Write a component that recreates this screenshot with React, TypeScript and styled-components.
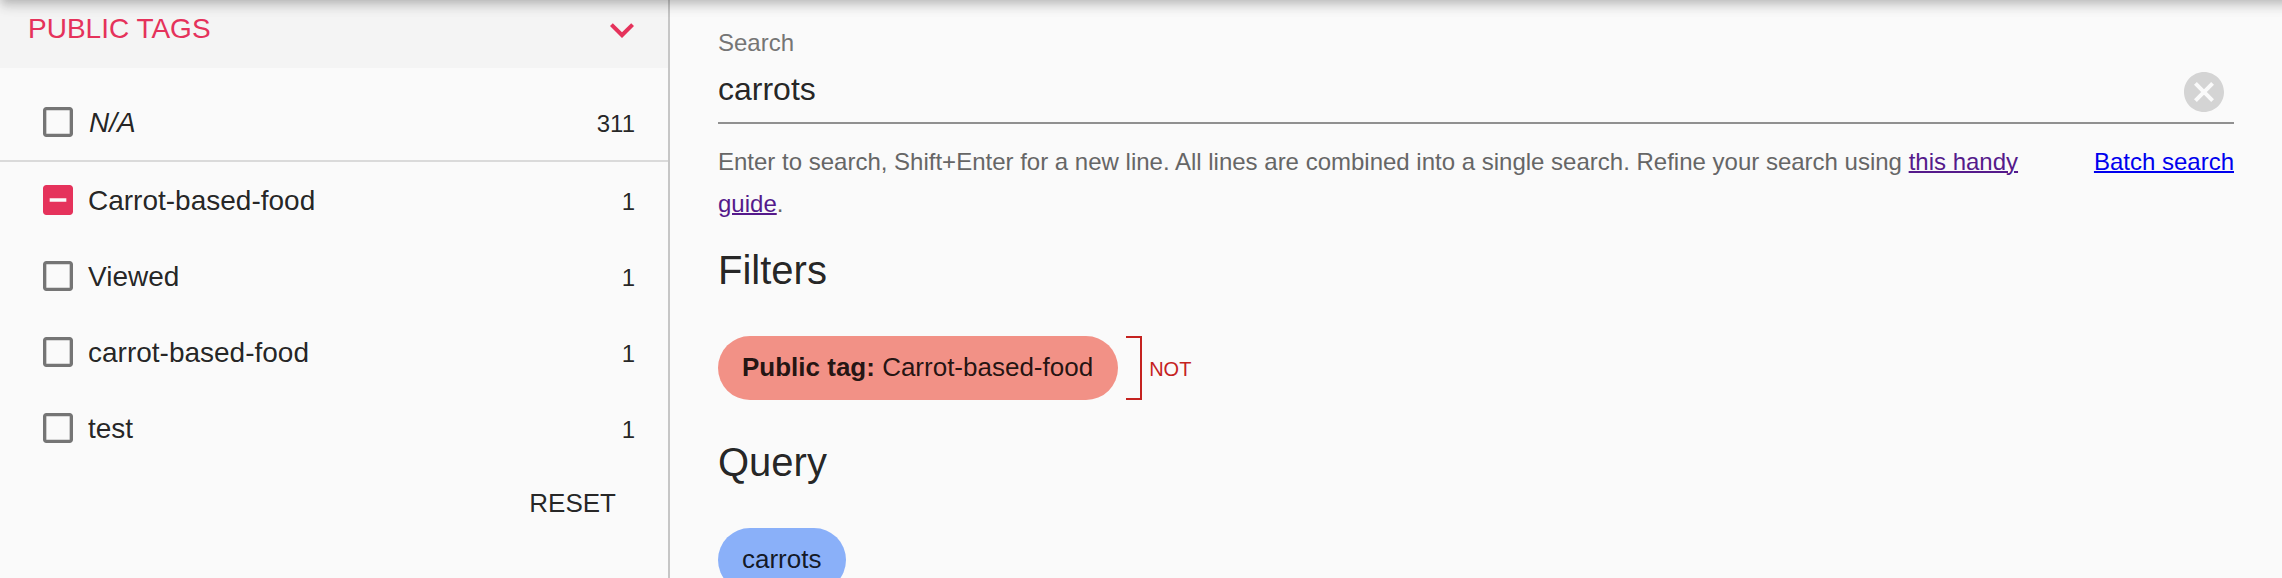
import React from "react";
import styled, { createGlobalStyle } from "styled-components";

const GlobalStyle = createGlobalStyle`
  *, *::before, *::after { box-sizing: border-box; }
  html, body { margin: 0; background: #fafafa; }
  body {
    height: 578px;
    overflow: hidden;
    color: rgba(0, 0, 0, 0.87);
    font-family: "Liberation Sans", Helvetica, Arial, sans-serif;
  }
`;

const Page = styled.div`
  position: relative;
  display: flex;
  height: 578px;
  overflow: hidden;
`;

/* The app bar is scrolled just out of view; only its shadow falls on the page. */
const AppBar = styled.header`
  position: absolute;
  top: -128px;
  left: 0;
  right: -40px;
  height: 128px;
  z-index: 2;
  pointer-events: none;
  box-shadow:
    0 4px 8px -2px rgba(0, 0, 0, 0.15),
    0 8px 10px 0 rgba(0, 0, 0, 0.1),
    0 2px 20px 0 rgba(0, 0, 0, 0.05);
`;

const Sidebar = styled.aside`
  flex: 0 0 670px;
  border-right: 2px solid #c6c6c6;
`;

const FacetHeader = styled.div`
  display: flex;
  align-items: center;
  justify-content: space-between;
  height: 68px;
  padding: 0 22px 8px 28px;
  background: #f4f4f4;
  color: #e5325b;
`;

const FacetTitle = styled.span`
  padding-bottom: 2px;
  font-size: 28px;
  line-height: 40px;
  text-transform: uppercase;
`;

const Icon = styled.svg<{ $size: number }>`
  display: block;
  flex: none;
  width: ${(p) => p.$size}px;
  height: ${(p) => p.$size}px;
  fill: currentColor;
`;

const FacetList = styled.ul`
  margin: 0;
  padding: 16px 0 0;
  list-style: none;
`;

const FacetRow = styled.li<{ $divider?: boolean }>`
  display: flex;
  align-items: center;
  height: ${(p) => (p.$divider ? 78 : 76)}px;
  padding: 0 33px 0 38px;
  border-bottom: ${(p) => (p.$divider ? "2px solid #dadada" : "none")};
`;

const CheckMark = styled.span<{ $active?: boolean }>`
  margin-right: 10px;
  color: ${(p) => (p.$active ? "#e5325b" : "#757575")};
`;

const FacetLabel = styled.span<{ $italic?: boolean }>`
  flex: 1;
  padding-top: 2px;
  padding-left: ${(p) => (p.$italic ? 1 : 0)}px;
  font-size: 28px;
  line-height: 40px;
  font-style: ${(p) => (p.$italic ? "italic" : "normal")};
`;

const FacetCount = styled.span`
  margin-top: 4px;
  font-size: 24px;
  line-height: 32px;
`;

const FacetActions = styled.div`
  display: flex;
  justify-content: flex-end;
  padding: 16px 52px 0 0;
`;

const ResetButton = styled.button`
  padding: 0;
  border: 0;
  background: none;
  color: inherit;
  font: 26px/42px "Liberation Sans", Helvetica, Arial, sans-serif;
  text-transform: uppercase;
`;

const Main = styled.main`
  flex: 1;
  padding: 26px 48px 0;
`;

const FieldLabel = styled.label`
  display: block;
  color: #757575;
  font-size: 24px;
  line-height: 34px;
`;

const InputLine = styled.div`
  display: flex;
  align-items: center;
  justify-content: space-between;
  height: 64px;
  padding: 0 6px 0 0;
  border-bottom: 2px solid #909090;
`;

const InputText = styled.span`
  padding-bottom: 4px;
  font-size: 32px;
  line-height: 38px;
`;

const ClearButton = styled.span`
  padding-top: 2px;
  color: #d4d4d4;
`;

const HelperRow = styled.div`
  display: flex;
  justify-content: space-between;
  gap: 64px;
  padding-top: 17px;
  color: #666;
  font-size: 24px;
  line-height: 42px;
`;

const Link = styled.a<{ $visited?: boolean }>`
  color: ${(p) => (p.$visited ? "#551a8b" : "#0000ee")};
  text-decoration: underline;
  text-decoration-thickness: 2px;
  white-space: ${(p) => (p.$visited ? "normal" : "nowrap")};
`;

const Results = styled.div`
  padding-top: 1px;
`;

const Section = styled.section`
  padding-top: 20px;
`;

const SectionTitle = styled.h2`
  margin: 0 0 42px;
  font-size: 40px;
  font-weight: 400;
  line-height: 48px;
`;

const ChipRow = styled.div`
  display: flex;
  align-items: center;
  margin-bottom: 18px;
`;

const Chip = styled.span<{ $negated?: boolean }>`
  height: 64px;
  padding: 0 25px 0 24px;
  border-radius: 32px;
  background: ${(p) => (p.$negated ? "#f29186" : "#8ab0f9")};
  font-size: 26px;
  line-height: 62px;
  white-space: pre;
`;

const Bracket = styled.span`
  width: 16px;
  height: 64px;
  margin: 0 7px 0 8px;
  border: 2px solid #c5221f;
  border-left: 0;
`;

const Operator = styled.span`
  padding-top: 1px;
  color: #c5221f;
  font-size: 20px;
  line-height: 30px;
`;

const boxPath =
  "M19 5v14H5V5h14m0-2H5c-1.1 0-2 .9-2 2v14c0 1.1.9 2 2 2h14c1.1 0 2-.9 2-2V5c0-1.1-.9-2-2-2z";
const minusPath =
  "M19 3H5c-1.1 0-2 .9-2 2v14c0 1.1.9 2 2 2h14c1.1 0 2-.9 2-2V5c0-1.1-.9-2-2-2zm-2 10H7v-2h10v2z";
const chevronPath = "M16.59 8.59L12 13.17 7.41 8.59 6 10l6 6 6-6z";
const cancelPath =
  "M12 2C6.47 2 2 6.47 2 12s4.47 10 10 10 10-4.47 10-10S17.53 2 12 2zm5 13.59L15.59 17 12 13.41 8.41 17 7 15.59 10.59 12 7 8.41 8.41 7 12 10.59 15.59 7 17 8.41 13.41 12 17 15.59z";

const Glyph = ({ d, size }: { d: string; size: number }) => (
  <Icon $size={size} viewBox="0 0 24 24" aria-hidden="true">
    <path d={d} />
  </Icon>
);

type Tag = { label: string; count: number; excluded?: boolean; missing?: boolean };

const tags: Tag[] = [
  { label: "N/A", count: 311, missing: true },
  { label: "Carrot-based-food", count: 1, excluded: true },
  { label: "Viewed", count: 1 },
  { label: "carrot-based-food", count: 1 },
  { label: "test", count: 1 },
];

export default function App() {
  return (
    <>
      <GlobalStyle />
      <Page>
        <AppBar />
        <Sidebar>
          <FacetHeader>
            <FacetTitle>Public tags</FacetTitle>
            <Glyph d={chevronPath} size={48} />
          </FacetHeader>
          <FacetList>
            {tags.map((tag) => (
              <FacetRow key={tag.label} $divider={tag.missing}>
                <CheckMark $active={tag.excluded}>
                  <Glyph d={tag.excluded ? minusPath : boxPath} size={40} />
                </CheckMark>
                <FacetLabel $italic={tag.missing}>{tag.label}</FacetLabel>
                <FacetCount>{tag.count}</FacetCount>
              </FacetRow>
            ))}
          </FacetList>
          <FacetActions>
            <ResetButton>Reset</ResetButton>
          </FacetActions>
        </Sidebar>
        <Main>
          <FieldLabel>Search</FieldLabel>
          <InputLine>
            <InputText>carrots</InputText>
            <ClearButton>
              <Glyph d={cancelPath} size={48} />
            </ClearButton>
          </InputLine>
          <HelperRow>
            <span>
              Enter to search, Shift+Enter for a new line. All lines are combined into a single
              search. Refine your search using <Link $visited>this handy guide</Link>.
            </span>
            <Link>Batch search</Link>
          </HelperRow>
          <Results>
            <Section>
              <SectionTitle>Filters</SectionTitle>
              <ChipRow>
                <Chip $negated>
                  <b>Public tag:</b> Carrot-based-food
                </Chip>
                <Bracket />
                <Operator>NOT</Operator>
              </ChipRow>
            </Section>
            <Section>
              <SectionTitle>Query</SectionTitle>
              <ChipRow>
                <Chip>carrots</Chip>
              </ChipRow>
            </Section>
          </Results>
        </Main>
      </Page>
    </>
  );
}
